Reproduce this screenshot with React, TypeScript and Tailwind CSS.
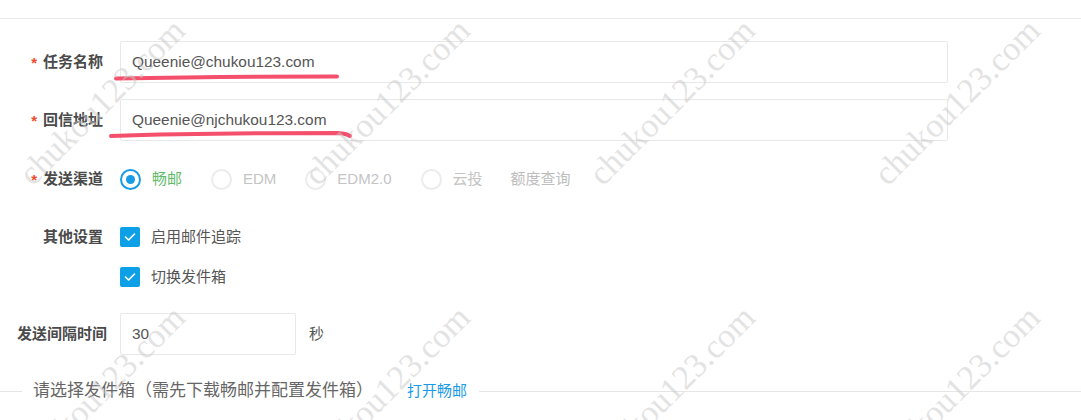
import React from "react";

const FONT = "font-['Liberation_Sans','Noto_Sans_CJK_SC',sans-serif]";

const marks: { x: number; y: number }[] = [];
for (let r = 0; r < 2; r++) {
  for (let c = 0; c < 4; c++) {
    marks.push({ x: 102 + c * 285, y: 102 + r * 287 });
  }
}

function Star() {
  return <span className="mr-[6px] text-[15px] leading-none text-[#f04a2a] font-bold">*</span>;
}

function Label({ children, required, pr = "pr-[17px]" }: { children: React.ReactNode; required?: boolean; pr?: string }) {
  return (
    <div className={`w-[120px] shrink-0 flex items-center justify-end whitespace-nowrap ${pr}`}>
      {required && <Star />}
      <span className="text-[15px] font-bold text-[#4a4a4a]">{children}</span>
    </div>
  );
}

function Radio({ label, checked, disabled }: { label: string; checked?: boolean; disabled?: boolean }) {
  return (
    <div className="flex items-center mr-[29px]">
      <span
        className={`w-[21px] h-[21px] rounded-full flex items-center justify-center border-2 ${
          checked ? "border-[#1a9be6]" : "border-[#ececec]"
        }`}
      >
        {checked && <span className="w-[9px] h-[9px] rounded-full bg-[#1a9be6]" />}
      </span>
      <span className={`ml-[11px] text-[15px] ${checked ? "text-[#62bb6a]" : disabled ? "text-[#c4c4c4]" : ""}`}>
        {label}
      </span>
    </div>
  );
}

function Check({ label }: { label: string }) {
  return (
    <div className="flex items-center">
      <span className="w-[20px] h-[20px] rounded-[2px] bg-[#0ea0e6] flex items-center justify-center">
        <svg width="12" height="10" viewBox="0 0 12 10" fill="none">
          <path d="M1.5 5 L4.6 8 L10.5 2" stroke="white" strokeWidth="1.6" strokeLinecap="round" strokeLinejoin="round" />
        </svg>
      </span>
      <span className="ml-[11px] text-[15px] text-[#555]">{label}</span>
    </div>
  );
}

export default function App() {
  return (
    <div className={`relative w-[1081px] h-[420px] overflow-hidden bg-white ${FONT}`}>
      <div className="h-[19px] border-b border-[#ececec]" />

      <div className="mt-[22px] h-[42px] flex items-center">
        <Label required>任务名称</Label>
        <div className="w-[828px] h-[42px] border border-[#e8e8e8] rounded-[2px] flex items-center px-[11px] text-[15.4px] text-[#555]">
          Queenie@chukou123.com
        </div>
      </div>

      <div className="mt-[16px] h-[42px] flex items-center">
        <Label required>回信地址</Label>
        <div className="w-[828px] h-[42px] border border-[#e8e8e8] rounded-[2px] flex items-center px-[11px] text-[15.4px] text-[#555]">
          Queenie@njchukou123.com
        </div>
      </div>

      <div className="mt-[17px] h-[42px] flex items-center">
        <Label required>发送渠道</Label>
        <div className="flex items-center">
          <Radio label="畅邮" checked />
          <Radio label="EDM" disabled />
          <Radio label="EDM2.0" disabled />
          <Radio label="云投" disabled />
          <span className="text-[15px] text-[#bdbdbd] -ml-[1px]">额度查询</span>
        </div>
      </div>

      <div className="mt-[27px] h-[20px] flex items-center">
        <Label>其他设置</Label>
        <Check label="启用邮件追踪" />
      </div>

      <div className="mt-[20px] h-[20px] flex items-center">
        <div className="w-[120px] shrink-0" />
        <Check label="切换发件箱" />
      </div>

      <div className="mt-[26px] h-[42px] flex items-center">
        <Label pr="pr-[13px]">发送间隔时间</Label>
        <div className="w-[176px] h-[42px] border border-[#e8e8e8] rounded-[2px] flex items-center px-[11px] text-[15.4px] text-[#555]">
          30
        </div>
        <span className="ml-[13px] text-[15px] text-[#555]">秒</span>
      </div>

      <div className="mt-[25px] h-[22px] flex items-center">
        <div className="w-[22px] h-px bg-[#e6e6e6]" />
        <span className="ml-[11px] text-[17px] text-[#666] whitespace-nowrap">请选择发件箱（需先下载畅邮并配置发件箱）</span>
        <span className="ml-[34px] text-[15px] text-[#1a9be6] whitespace-nowrap">打开畅邮</span>
        <div className="ml-[12px] flex-1 h-px bg-[#e6e6e6]" />
      </div>

      <svg className="absolute inset-0 pointer-events-none" width="1081" height="420">
        <path d="M116 78.5 Q 220 76.5 337 76.5" stroke="#f4506b" strokeWidth="4" strokeLinecap="round" fill="none" />
        <path d="M111 136 Q 200 133 338 133 Q 346 133.5 350 136" stroke="#f4506b" strokeWidth="4" strokeLinecap="round" fill="none" />
      </svg>

      <div className="absolute inset-0 pointer-events-none">
        {marks.map((m, i) => (
          <div
            key={i}
            className="absolute font-['Liberation_Serif',serif] text-[34px] leading-none whitespace-nowrap text-[rgba(200,200,200,0.5)] -translate-x-1/2 -translate-y-1/2 -rotate-45"
            style={{ left: m.x, top: m.y }}
          >
            chukou123.com
          </div>
        ))}
      </div>
    </div>
  );
}
